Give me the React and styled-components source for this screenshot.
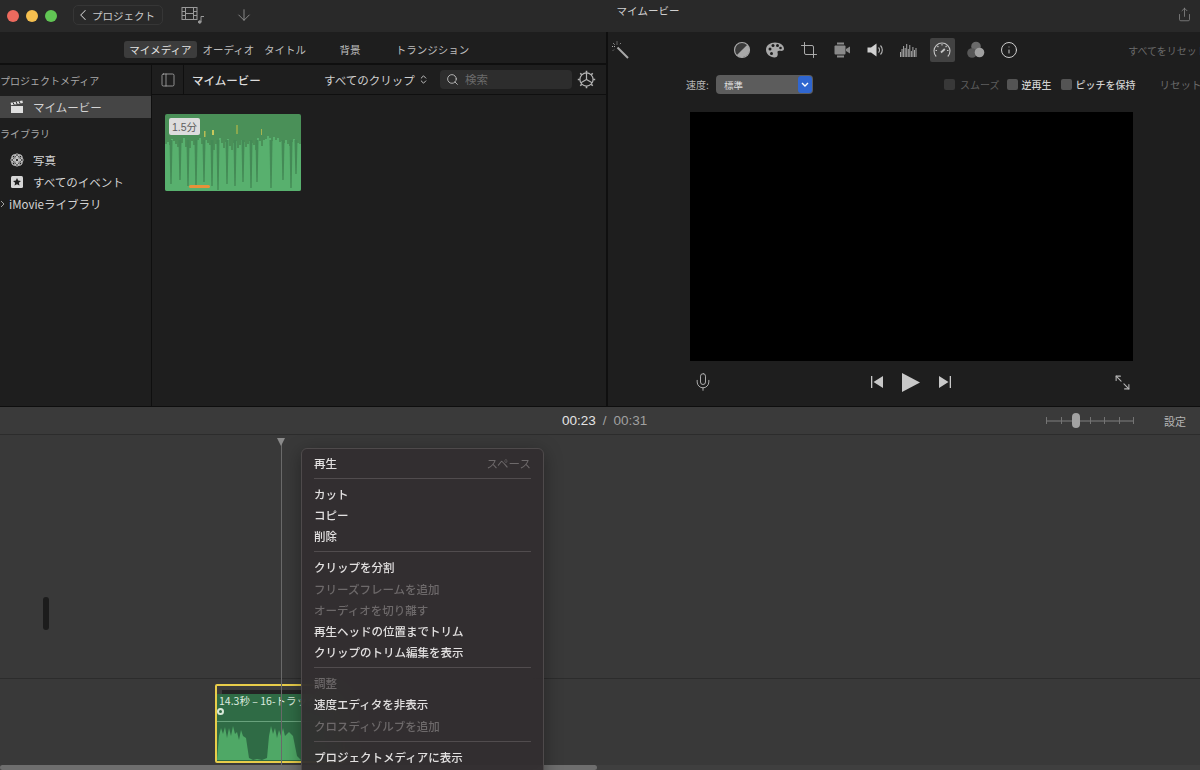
import React from 'react';
import styled, { createGlobalStyle } from 'styled-components';
import { ArrowDown, ChevronLeft, ChevronsUpDown, Crop, Info, Maximize2, Mic, PanelLeft, Search, Share } from 'lucide-react';

const GlobalStyle = createGlobalStyle`
    html, body {
        margin: 0;
        background: #1e1e1e;
    }
    body {
        font-family: "Noto Sans CJK JP", "Noto Sans", sans-serif;
        color: #d8d8d8;
        overflow: hidden;
    }
    * {
        box-sizing: border-box;
    }
`;

const Page = styled.div`
    width: 1200px;
    height: 770px;
    display: flex;
    flex-direction: column;
    overflow: hidden;
`;

/* title bar */
const TitleBar = styled.header`
    position: relative;
    height: 32px;
    flex: none;
    display: flex;
    align-items: center;
    padding-left: 7px;
    background: #292929;
`;

const Light = styled.span`
    width: 12px;
    height: 12px;
    border-radius: 50%;
    margin-right: 7px;
    background: ${(p) => p.$color};
`;

const BackButton = styled.div`
    width: 90px;
    height: 20px;
    margin: -2px 0 0 9px;
    display: flex;
    align-items: center;
    border: 1px solid #363636;
    border-radius: 5px;
    font-size: 10.5px;
    color: #c8c8c8;
    white-space: nowrap;
`;

const TitleIcon = styled.div`
    display: flex;
    color: #9a9a9a;
    margin-top: -3px;
    margin-left: ${(p) => p.$left}px;
`;

const WindowTitle = styled.div`
    position: absolute;
    left: 0;
    right: 0;
    top: 3px;
    text-align: center;
    font-size: 10.5px;
    color: #d0d0d0;
    padding-left: 96px;
`;

const ShareIcon = styled.div`
    margin-left: auto;
    margin-right: 8px;
    display: flex;
    color: #8c8c8c;
    margin-top: -4px;
`;

/* upper panels */
const Panels = styled.div`
    height: 375px;
    flex: none;
    display: flex;
    background: #1e1e1e;
    border-bottom: 1px solid #0e0e0e;
`;

const Browser = styled.section`
    width: 608px;
    flex: none;
    display: flex;
    flex-direction: column;
    border-right: 2px solid #0f0f0f;
`;

const TabBar = styled.nav`
    height: 33px;
    flex: none;
    display: flex;
    align-items: center;
    padding: 3px 0 0 124px;
    border-bottom: 2px solid #0f0f0f;
`;

const Tab = styled.div`
    width: ${(p) => p.$width}px;
    height: 17px;
    display: flex;
    align-items: center;
    justify-content: center;
    border-radius: 3px;
    font-size: 10.5px;
    white-space: nowrap;
    color: ${(p) => (p.$active ? '#e4e4e4' : '#bdbdbd')};
    background: ${(p) => (p.$active ? '#3c3c3c' : 'transparent')};
`;

const BrowserBody = styled.div`
    flex: 1;
    display: flex;
    min-height: 0;
`;

const Sidebar = styled.aside`
    width: 152px;
    flex: none;
    border-right: 1px solid #0f0f0f;
    padding-top: 4px;
`;

const SidebarHeading = styled.div`
    height: 22px;
    margin-bottom: ${(p) => p.$after || 0}px;
    display: flex;
    align-items: center;
    font-size: 10px;
    color: #a8a8a8;
    white-space: nowrap;
`;

const SidebarRow = styled.div`
    height: 22px;
    display: flex;
    align-items: center;
    gap: ${(p) => p.$gap}px;
    padding-left: ${(p) => p.$indent}px;
    font-size: 11.5px;
    color: #d4d4d4;
    white-space: nowrap;
    background: ${(p) => (p.$selected ? '#454545' : 'transparent')};
    margin-bottom: ${(p) => p.$after || 0}px;
`;

const RowIcon = styled.span`
    width: 14px;
    height: 14px;
    display: flex;
    flex: none;
`;

const Media = styled.div`
    flex: 1;
    display: flex;
    flex-direction: column;
    min-width: 0;
`;

const MediaBar = styled.div`
    height: 30px;
    flex: none;
    display: flex;
    align-items: center;
    border-bottom: 1px solid #0f0f0f;
`;

const ToggleCell = styled.div`
    width: 32px;
    height: 100%;
    display: flex;
    align-items: center;
    justify-content: center;
    color: #b8b8b8;
    border-right: 1px solid #0f0f0f;
`;

const MediaTitle = styled.div`
    margin-left: 8px;
    width: 132px;
    font-size: 11.5px;
    color: #dcdcdc;
    font-weight: 500;
`;

const ClipFilter = styled.div`
    width: 116px;
    display: flex;
    align-items: center;
    gap: 3px;
    font-size: 11.5px;
    color: #cfcfcf;
    white-space: nowrap;
`;

const SearchField = styled.div`
    width: 132px;
    height: 19px;
    margin-top: -1px;
    display: flex;
    align-items: center;
    gap: 6px;
    padding-left: 6px;
    border-radius: 4px;
    background: #2d2d2d;
    color: #c4c4c4;
    font-size: 11.5px;
`;

const Placeholder = styled.span`
    color: #6a6a6a;
`;

const GearSlot = styled.div`
    margin-left: 5px;
    display: flex;
    color: #b4b4b4;
`;

const MediaGrid = styled.div`
    padding: 19px 0 0 13px;
`;

const Thumbnail = styled.div`
    position: relative;
    width: 136px;
    height: 77px;
    border-radius: 2px;
    overflow: hidden;
    background: #4a9058;
`;

const ThumbSvg = styled.svg`
    position: absolute;
    inset: 0;
`;

const DurationBadge = styled.span`
    position: absolute;
    top: 4px;
    left: 4px;
    width: 31px;
    height: 17px;
    display: flex;
    align-items: center;
    justify-content: center;
    border-radius: 2px;
    background: #dddddd;
    color: #5d5d5d;
    font-size: 10.5px;
    font-family: "Liberation Sans", "Noto Sans CJK JP", sans-serif;
`;

const UsedRange = styled.span`
    position: absolute;
    left: 24px;
    bottom: 3px;
    width: 21px;
    height: 3px;
    border-radius: 2px;
    background: #e8913a;
`;

const Viewer = styled.section`
    flex: 1;
    min-width: 0;
    display: flex;
    flex-direction: column;
    overflow: hidden;
`;

const InspectorBar = styled.div`
    height: 36px;
    flex: none;
    display: flex;
    align-items: center;
    padding-left: 2px;
    white-space: nowrap;
    & > * {
        flex: none;
    }
`;

const ToolGroup = styled.div`
    display: flex;
    align-items: center;
    gap: 8.4px;
    margin-left: 99.5px;
`;

const ToolButton = styled.div`
    width: 25px;
    height: 24px;
    display: flex;
    align-items: center;
    justify-content: center;
    border-radius: 2px;
    color: #b0b0b0;
    background: ${(p) => (p.$active ? '#424242' : 'transparent')};
`;

const MutedLabel = styled.span`
    font-size: 10px;
    color: #6a6a6a;
    white-space: nowrap;
`;

const ResetAll = styled(MutedLabel)`
    margin-left: 106.5px;
`;

const SpeedBar = styled.div`
    height: 34px;
    flex: none;
    display: flex;
    align-items: center;
    padding: 0 0 1px 78px;
    white-space: nowrap;
    & > * {
        flex: none;
    }
`;

const SpeedLabel = styled.span`
    width: 30px;
    font-size: 10px;
    color: #b8b8b8;
`;

const Select = styled.div`
    width: 97px;
    height: 19px;
    display: flex;
    align-items: center;
    justify-content: space-between;
    padding-left: 8px;
    border-radius: 4px;
    background: #5c5c5c;
    font-size: 9.5px;
    color: #dddddd;
`;

const SelectArrow = styled.span`
    width: 14px;
    height: 17px;
    margin-right: 1px;
    display: flex;
    align-items: center;
    justify-content: center;
    border-radius: 3px;
    background: #2f66d0;
    color: #ffffff;
`;

const Option = styled.label`
    display: flex;
    align-items: center;
    gap: ${(p) => (p.$disabled ? 5 : 4)}px;
    margin-left: ${(p) => p.$left}px;
    font-size: 10px;
    font-weight: ${(p) => (p.$disabled ? 400 : 500)};
    color: ${(p) => (p.$disabled ? '#5e5e5e' : '#d0d0d0')};
`;

const Box = styled.span`
    width: 11px;
    height: 11px;
    border-radius: 2px;
    background: ${(p) => (p.$disabled ? '#383838' : '#545454')};
`;

const ResetLabel = styled(MutedLabel)`
    margin-left: 24px;
    font-size: 10.5px;
`;

const PreviewArea = styled.div`
    margin: 10px 0 0 82px;
    width: 443px;
    height: 249px;
    flex: none;
    background: #000000;
`;

const Transport = styled.div`
    width: 443px;
    margin-left: 82px;
    flex: 1;
    display: flex;
    align-items: center;
    color: #c8c8c8;
    padding-bottom: 3px;
`;

const TransportSide = styled.div`
    width: 150px;
    display: flex;
    color: #b8b8b8;
    justify-content: ${(p) => p.$align};
    padding: 0 ${(p) => p.$pad}px;
`;

const TransportCenter = styled.div`
    flex: 1;
    display: flex;
    align-items: center;
    justify-content: center;
    gap: 18px;
    margin-left: -2px;
`;

const ExpandIcon = styled(Maximize2)`
    transform: scaleX(-1);
`;

/* timeline */
const TimelineBar = styled.div`
    height: 28px;
    flex: none;
    position: relative;
    display: flex;
    align-items: center;
    justify-content: flex-end;
    padding-right: 14px;
    background: #3a3a3a;
    border-bottom: 1px solid #2c2c2c;
`;

const Timecode = styled.div`
    position: absolute;
    left: 562px;
    top: 0;
    bottom: 0;
    display: flex;
    align-items: center;
    gap: 7px;
    font-family: "Liberation Sans", sans-serif;
    font-size: 13.5px;
    color: #a0a0a0;
`;

const CurrentTime = styled.span`
    color: #e4e4e4;
    font-weight: 500;
`;

const Zoom = styled.div`
    position: relative;
    width: 88px;
    height: 16px;
    margin-right: 30px;
    display: flex;
    align-items: center;
    justify-content: space-between;
    &::before {
        content: '';
        position: absolute;
        left: 0;
        right: 0;
        top: 7px;
        height: 2px;
        background: #5c5c5c;
    }
`;

const ZoomTick = styled.span`
    position: relative;
    width: 1px;
    height: 7px;
    background: #747474;
`;

const ZoomThumb = styled.span`
    position: absolute;
    left: 26px;
    top: 0;
    width: 8px;
    height: 15px;
    border-radius: 4px;
    background: #a2a2a2;
`;

const SettingsLabel = styled.span`
    font-size: 11px;
    color: #b4b4b4;
`;

const Timeline = styled.div`
    position: relative;
    flex: 1;
    overflow: hidden;
    background: #393939;
`;

const Playhead = styled.div`
    position: absolute;
    left: 281px;
    top: 3px;
    bottom: 0;
    width: 1px;
    background: #6a6a6a;
    &::before {
        content: '';
        position: absolute;
        left: -4px;
        top: 0;
        border: 4.5px solid transparent;
        border-top: 8px solid #8a8a8a;
        border-bottom: 0;
    }
`;

const ScrollGrip = styled.div`
    position: absolute;
    left: 43px;
    top: 162px;
    width: 6px;
    height: 33px;
    border-radius: 3px;
    background: #1c1c1c;
`;

const TrackLine = styled.div`
    position: absolute;
    left: 0;
    right: 0;
    top: 243px;
    height: 1px;
    background: #2c2c2c;
`;

const Clip = styled.div`
    position: absolute;
    left: 215px;
    top: 249px;
    width: 130px;
    height: 79px;
    border: 2px solid #e8cd4a;
    border-radius: 2px;
    background: #3c3c3c;
`;

const ClipStrip = styled.div`
    height: 4px;
    margin: 4px 0 0 5px;
    background: #242424;
`;

const ClipBody = styled.div`
    position: relative;
    height: 67px;
    background: #2f6b45;
`;

const ClipTitle = styled.div`
    padding-left: 2px;
    height: 28px;
    font-size: 10.5px;
    line-height: 14px;
    color: #dceadf;
    white-space: nowrap;
    border-bottom: 1px solid #68a27c;
`;

const KeyDot = styled.span`
    position: absolute;
    left: 0;
    top: 14px;
    width: 7px;
    height: 7px;
    border-radius: 50%;
    border: 2px solid #d8e8d8;
    background: #2f6b45;
`;

const ClipSvg = styled.svg`
    position: absolute;
    left: 0;
    bottom: 0;
`;

const ScrollTrack = styled.div`
    position: absolute;
    left: 0;
    right: 0;
    bottom: 0;
    height: 5px;
    background: #3f3f3f;
`;

const ScrollThumb = styled.div`
    width: 597px;
    height: 100%;
    border-radius: 3px;
    background: #6e6e6e;
`;

const ContextMenu = styled.div`
    position: absolute;
    left: 301px;
    top: 13px;
    width: 243px;
    padding: 3px 12px 0;
    height: 340px;
    border-radius: 6px;
    border: 1px solid #4e4a4b;
    background: rgba(50, 45, 47, 0.93);
    backdrop-filter: blur(14px);
    box-shadow: 0 4px 18px rgba(0, 0, 0, 0.35);
`;

const MenuItem = styled.div`
    height: 21.2px;
    display: flex;
    align-items: center;
    justify-content: space-between;
    font-size: 11.5px;
    font-weight: 500;
    white-space: nowrap;
    color: ${(p) => (p.$disabled ? '#6d696a' : '#e2e0e0')};
`;

const Shortcut = styled.span`
    color: #6d696a;
    font-weight: 400;
`;

const MenuRule = styled.div`
    height: 10px;
    display: flex;
    align-items: center;
    &::before {
        content: '';
        flex: 1;
        height: 1px;
        background: #514c4e;
    }
`;

/* drawn icons */
const FilmNote = () => (
    <svg width="26" height="20" viewBox="0 0 26 20" fill="none" stroke="currentColor">
        <rect x="1" y="2.500" width="15" height="12" />
        <path d="M4.500 2.500v12M12.500 2.500v12M1 6.500h3.500M1 10.500h3.500M12.500 6.500H16M12.500 10.500H16M4.500 8.500h8" />
        <path d="M20 17V11.500h3" />
        <circle cx="18.700" cy="17" r="1.300" fill="currentColor" />
    </svg>
);

const Clapper = () => (
    <svg width="14" height="14" viewBox="0 0 14 14" fill="#e0e0e0">
        <path d="M1 6h12v7H1z" />
        <path d="M.6 2.800 12.400.4l.5 2.500L1.100 5.300z" />
        <path d="M3 2.400l1.200 2.300M6 1.800l1.200 2.300M9 1.200l1.200 2.300" stroke="#1e1e1e" />
    </svg>
);

const Flower = () => (
    <svg width="14" height="14" viewBox="0 0 14 14" fill="none" stroke="#c8c8c8" strokeWidth="1">
        {[0, 45, 90, 135, 180, 225, 270, 315].map((angle) => (
            <circle key={angle} cx="7" cy="3.200" r="2.300" transform={`rotate(${angle} 7 7)`} />
        ))}
    </svg>
);

const StarBox = () => (
    <svg width="14" height="14" viewBox="0 0 14 14">
        <rect x="1" y="1" width="12" height="12" rx="1.500" fill="#d6d6d6" />
        <path d="M7 3l1.200 2.600 2.800.3-2.100 1.900.6 2.800L7 9.200l-2.500 1.400.6-2.800L3 5.900l2.800-.3z" fill="#1e1e1e" />
    </svg>
);

const Gear = () => (
    <svg width="19" height="19" viewBox="0 0 19 19" fill="none" stroke="currentColor" strokeWidth="1.200">
        <circle cx="9.500" cy="9.500" r="6.600" />
        <path d="M9.500 9.500V3M9.500 9.500l5.600 3.200M9.500 9.500l-5.600 3.200" />
        <path
            d="M9.500.8v2M9.500 16.200v2M.8 9.500h2M16.200 9.500h2M3.300 3.300l1.400 1.400M14.300 14.300l1.400 1.400M3.300 15.700l1.400-1.400M14.300 4.700l1.400-1.400"
            strokeWidth="1.600"
        />
    </svg>
);

const Wand = () => (
    <svg width="20" height="20" viewBox="0 0 20 20" stroke="#a8a8a8" fill="none">
        <path d="M7.500 7.500 18 18" strokeWidth="2" />
        <path d="M7 1.500v3M2 6.500h3M3 3l2 2M11 3 9.500 4.500M3 10.500 4.500 9" strokeWidth="1" strokeDasharray="1 1" />
    </svg>
);

const Contrast = () => (
    <svg width="18" height="18" viewBox="0 0 18 18">
        <circle cx="9" cy="9" r="7.500" fill="#3a3a3a" stroke="#a8a8a8" strokeWidth="1.200" />
        <path d="M14.300 3.700A7.500 7.500 0 0 1 3.700 14.300z" fill="#a8a8a8" />
    </svg>
);

const Palette = () => (
    <svg width="20" height="18" viewBox="0 0 20 18">
        <path
            d="M10 1.500c5 0 9 2.800 9 6.300 0 2.200-2.500 2.400-4.200 2-1.700-.3-2.600.5-2.200 2 .4 1.600.3 4.700-3 4.700C5 16.500 1 13 1 8.800 1 4.500 5 1.500 10 1.500z"
            fill="#a8a8a8"
        />
        <g fill="#1e1e1e">
            <circle cx="5" cy="8" r="1.500" />
            <circle cx="8" cy="4.500" r="1.500" />
            <circle cx="12.500" cy="4.500" r="1.500" />
            <circle cx="15.500" cy="7" r="1.300" />
            <circle cx="6.500" cy="12.500" r="1.500" />
        </g>
    </svg>
);

const Camera = () => (
    <svg width="16" height="18" viewBox="0 0 16 18" fill="#8a8a8a">
        <path d="M3 1.500h7v2H3zM3 14.500h7v2H3z" />
        <rect x="0.500" y="4.500" width="11" height="9" rx="1" />
        <path d="M12 8l4-2.500v7L12 10z" />
    </svg>
);

const Speaker = () => (
    <svg width="18" height="16" viewBox="0 0 18 16" fill="none">
        <path d="M0.500 5.500h3.500L9.500 1.500v13L4 10.500H0.500z" fill="#d0d0d0" />
        <path d="M11.500 5.500a3.500 3.500 0 0 1 0 5M13.500 3.500a6.500 6.500 0 0 1 0 9" stroke="#b4b4b4" strokeWidth="1.100" />
    </svg>
);

const Equalizer = () => {
    const bars = [5, 8, 11, 9, 13, 8, 12, 6, 10, 7, 9];
    return (
        <svg width="17" height="14" viewBox="0 0 17 14" fill="#a8a8a8">
            {bars.map((h, i) => (
                <rect key={i} x={i * 1.55} y={14 - h} width="1" height={h} />
            ))}
        </svg>
    );
};

const Gauge = () => (
    <svg width="18" height="16" viewBox="0 0 18 16" fill="none" stroke="#c4c4c4" strokeWidth="1.100">
        <path d="M3.200 14.500a8 8 0 1 1 11.600 0" />
        <path d="M9 2v1.500M2.500 8.500H4M14 8.500h1.500M4.400 4l1 1M13.600 4l-1 1" />
        <path d="M8 10.500l3.800-3.500" strokeWidth="1.800" />
    </svg>
);

const ColorDots = () => (
    <svg width="18" height="18" viewBox="0 0 18 18">
        <circle cx="9" cy="5.500" r="4.800" fill="#6a6a6a" />
        <circle cx="5" cy="12" r="4.800" fill="#585858" />
        <circle cx="12.500" cy="11.500" r="4.800" fill="#a0a0a0" />
    </svg>
);

const PrevIcon = () => (
    <svg width="14" height="12" viewBox="0 0 14 12" fill="currentColor">
        <path d="M1 0h1.300v12H1zM13 0v12L3.500 6z" />
    </svg>
);

const NextIcon = () => (
    <svg width="14" height="12" viewBox="0 0 14 12" fill="currentColor">
        <path d="M13 0h-1.300v12H13zM1 0v12l9.500-6z" />
    </svg>
);

const PlayIcon = () => (
    <svg width="18" height="19" viewBox="0 0 18 19" fill="currentColor">
        <path d="M0 0l18 9.500L0 19z" />
    </svg>
);

/* wave forms, from fixed sample lists */
const thumbTops = [
    30, 28, 31, 25, 27, 30, 33, 26, 29, 24, 33, 30, 34, 27, 31, 38, 26, 24, 30, 33, 26, 29, 31, 26, 36, 30, 27, 24, 29, 34,
    28, 25, 32, 36, 29, 27, 34, 31, 26, 28, 33, 30, 27, 29, 31, 36, 24, 27, 32, 26, 25, 22, 24, 27, 23, 26, 24, 28, 27, 29,
    26, 30, 32, 28, 25, 27, 29, 30,
];
const thumbStripes = [
    [6, 62], [15, 58], [23, 64], [31, 66], [39, 60], [47, 64], [53, 68], [62, 62], [70, 64], [78, 60], [86, 66], [92, 60],
    [106, 66], [118, 58], [126, 66], [131, 52],
];

const ThumbWave = () => {
    const points = thumbTops.map((top, i) => `${i * 2},${top} ${i * 2 + 2},${top}`).join(' ');
    return (
        <ThumbSvg width="136" height="77" viewBox="0 0 136 77">
            <polygon points={`0,77 ${points} 136,77`} fill="#58b06e" />
            {thumbStripes.map(([x, bottom]) => (
                <polygon key={x} points={`${x - 1.5},26 ${x + 1.5},26 ${x + 0.7},${bottom + 8} ${x - 0.7},${bottom + 8}`} fill="#448a56" />
            ))}
            <rect x="39" y="17" width="1.500" height="6" fill="#b8bc54" />
            <rect x="47" y="16" width="2" height="5" fill="#c8c85c" />
            <rect x="71" y="11" width="2" height="9" fill="#8aa84e" />
            <rect x="96" y="15" width="1" height="6" fill="#a8b450" />
        </ThumbSvg>
    );
};

const ClipWave = () => (
    <ClipSvg width="126" height="39" viewBox="0 0 126 39">
        <path
            d="M0 38 2 14 4 6 6 12 8 5 10 16 12 6 14 14 16 4 18 12 20 10 22 18 24 8 26 14 29 16 32 36 36 38 40 37 45 38 50 36 52 14 54 4 56 12 58 6 60 16 62 8 64 14 66 6 68 14 72 10 76 14 80 34 84 38z"
            fill="#4fa866"
        />
    </ClipSvg>
);

const menuEntries = [
    { label: '再生', shortcut: 'スペース' },
    { rule: true },
    { label: 'カット' },
    { label: 'コピー' },
    { label: '削除' },
    { rule: true },
    { label: 'クリップを分割' },
    { label: 'フリーズフレームを追加', disabled: true },
    { label: 'オーディオを切り離す', disabled: true },
    { label: '再生ヘッドの位置までトリム' },
    { label: 'クリップのトリム編集を表示' },
    { rule: true },
    { label: '調整', disabled: true },
    { label: '速度エディタを非表示' },
    { label: 'クロスディゾルブを追加', disabled: true },
    { rule: true },
    { label: 'プロジェクトメディアに表示' },
];

const tabs = [
    { label: 'マイメディア', width: 73, active: true },
    { label: 'オーディオ', width: 63 },
    { label: 'タイトル', width: 50 },
    { label: '背景', width: 80 },
    { label: 'トランジション', width: 85 },
];

const App = () => (
    <Page>
        <GlobalStyle />
        <TitleBar>
            <Light $color="#ed6a5e" />
            <Light $color="#f5bf4f" />
            <Light $color="#61c554" />
            <BackButton>
                <ChevronLeft size={18} strokeWidth={1.4} />
                <span>プロジェクト</span>
            </BackButton>
            <TitleIcon $left={18}>
                <FilmNote />
            </TitleIcon>
            <TitleIcon $left={28}>
                <ArrowDown size={18} strokeWidth={1.1} />
            </TitleIcon>
            <WindowTitle>マイムービー</WindowTitle>
            <ShareIcon>
                <Share size={15} strokeWidth={1.2} />
            </ShareIcon>
        </TitleBar>

        <Panels>
            <Browser>
                <TabBar>
                    {tabs.map((tab) => (
                        <Tab key={tab.label} $width={tab.width} $active={tab.active}>
                            {tab.label}
                        </Tab>
                    ))}
                </TabBar>
                <BrowserBody>
                    <Sidebar>
                        <SidebarHeading $after={5}>プロジェクトメディア</SidebarHeading>
                        <SidebarRow $selected $indent={10} $gap={9} $after={4}>
                            <RowIcon>
                                <Clapper />
                            </RowIcon>
                            マイムービー
                        </SidebarRow>
                        <SidebarHeading $after={5}>ライブラリ</SidebarHeading>
                        <SidebarRow $indent={10} $gap={9}>
                            <RowIcon>
                                <Flower />
                            </RowIcon>
                            写真
                        </SidebarRow>
                        <SidebarRow $indent={10} $gap={9}>
                            <RowIcon>
                                <StarBox />
                            </RowIcon>
                            すべてのイベント
                        </SidebarRow>
                        <SidebarRow $indent={0} $gap={4}>
                            <svg width="5" height="8" viewBox="0 0 5 8" fill="none" stroke="#a0a0a0">
                                <path d="M1 1l3 3-3 3" />
                            </svg>
                            iMovieライブラリ
                        </SidebarRow>
                    </Sidebar>
                    <Media>
                        <MediaBar>
                            <ToggleCell>
                                <PanelLeft size={16} strokeWidth={1.1} />
                            </ToggleCell>
                            <MediaTitle>マイムービー</MediaTitle>
                            <ClipFilter>
                                すべてのクリップ
                                <ChevronsUpDown size={11} strokeWidth={2} />
                            </ClipFilter>
                            <SearchField>
                                <Search size={13} strokeWidth={1.6} />
                                <Placeholder>検索</Placeholder>
                            </SearchField>
                            <GearSlot>
                                <Gear />
                            </GearSlot>
                        </MediaBar>
                        <MediaGrid>
                            <Thumbnail>
                                <ThumbWave />
                                <DurationBadge>1.5分</DurationBadge>
                                <UsedRange />
                            </Thumbnail>
                        </MediaGrid>
                    </Media>
                </BrowserBody>
            </Browser>

            <Viewer>
                <InspectorBar>
                    <Wand />
                    <ToolGroup>
                        <ToolButton><Contrast /></ToolButton>
                        <ToolButton><Palette /></ToolButton>
                        <ToolButton><Crop size={18} strokeWidth={1.3} /></ToolButton>
                        <ToolButton><Camera /></ToolButton>
                        <ToolButton><Speaker /></ToolButton>
                        <ToolButton><Equalizer /></ToolButton>
                        <ToolButton $active><Gauge /></ToolButton>
                        <ToolButton><ColorDots /></ToolButton>
                        <ToolButton><Info size={18} strokeWidth={1.3} color="#d0d0d0" /></ToolButton>
                    </ToolGroup>
                    <ResetAll>すべてをリセット</ResetAll>
                </InspectorBar>
                <SpeedBar>
                    <SpeedLabel>速度:</SpeedLabel>
                    <Select>
                        標準
                        <SelectArrow>
                            <svg width="8" height="5" viewBox="0 0 8 5" fill="none" stroke="currentColor" strokeWidth="1.400">
                                <path d="M1 1l3 3 3-3" />
                            </svg>
                        </SelectArrow>
                    </Select>
                    <Option $disabled $left={131}>
                        <Box $disabled />
                        スムーズ
                    </Option>
                    <Option $left={7}>
                        <Box />
                        逆再生
                    </Option>
                    <Option $left={9}>
                        <Box />
                        ピッチを保持
                    </Option>
                    <ResetLabel>リセット</ResetLabel>
                </SpeedBar>
                <PreviewArea />
                <Transport>
                    <TransportSide $align="flex-start" $pad={3}>
                        <Mic size={20} strokeWidth={1.1} />
                    </TransportSide>
                    <TransportCenter>
                        <PrevIcon />
                        <PlayIcon />
                        <NextIcon />
                    </TransportCenter>
                    <TransportSide $align="flex-end" $pad={2}>
                        <ExpandIcon size={17} strokeWidth={1.5} />
                    </TransportSide>
                </Transport>
            </Viewer>
        </Panels>

        <TimelineBar>
            <Timecode>
                <CurrentTime>00:23</CurrentTime>/<span>00:31</span>
            </Timecode>
            <Zoom>
                {[0, 1, 2, 3, 4, 5, 6].map((tick) => (
                    <ZoomTick key={tick} />
                ))}
                <ZoomThumb />
            </Zoom>
            <SettingsLabel>設定</SettingsLabel>
        </TimelineBar>

        <Timeline>
            <TrackLine />
            <ScrollGrip />
            <Clip>
                <ClipStrip />
                <ClipBody>
                    <ClipTitle>14.3秒 – 16-トラック</ClipTitle>
                    <KeyDot />
                    <ClipWave />
                </ClipBody>
            </Clip>
            <Playhead />
            <ScrollTrack>
                <ScrollThumb />
            </ScrollTrack>
            <ContextMenu>
                {menuEntries.map((entry, i) =>
                    entry.rule ? (
                        <MenuRule key={i} />
                    ) : (
                        <MenuItem key={i} $disabled={entry.disabled}>
                            {entry.label}
                            {entry.shortcut && <Shortcut>{entry.shortcut}</Shortcut>}
                        </MenuItem>
                    )
                )}
            </ContextMenu>
        </Timeline>
    </Page>
);

export default App;
